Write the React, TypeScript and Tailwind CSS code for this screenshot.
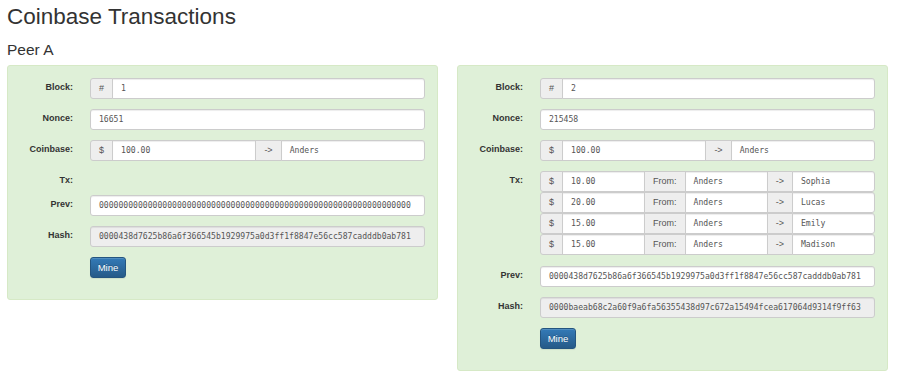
import React from "react";

const mono = { fontFamily: '"DejaVu Sans Mono", "Liberation Mono", monospace' } as React.CSSProperties;

function Addon({ children, first, last }: { children: React.ReactNode; first?: boolean; last?: boolean }) {
  return (
    <span
      className={
        "flex h-[21px] shrink-0 items-center justify-center border border-[#ccc] bg-[#eee] px-[8px] text-[9px] leading-[19px] text-[#555] " +
        (first ? "rounded-l-[3px] " : "-ml-px ") +
        (last ? "rounded-r-[3px]" : "")
      }
    >
      {children}
    </span>
  );
}

function Field({
  value,
  first,
  last,
  readOnly,
  grow = true,
}: {
  value: string;
  first?: boolean;
  last?: boolean;
  readOnly?: boolean;
  grow?: boolean;
}) {
  return (
    <div
      className={
        "flex h-[21px] min-w-0 items-center overflow-hidden whitespace-nowrap border border-[#ccc] px-[8px] text-[8.1px] leading-[19px] text-[#555] shadow-[inset_0_1px_1px_rgba(0,0,0,0.075)] " +
        (grow ? "flex-1 basis-0 " : "") +
        (readOnly ? "bg-[#eee] " : "bg-white ") +
        (first ? "rounded-l-[3px] " : "-ml-px ") +
        (last ? "rounded-r-[3px]" : "")
      }
      style={mono}
    >
      {value}
    </div>
  );
}

function Row({ label, children, className = "mb-[10px]" }: { label: string; children?: React.ReactNode; className?: string }) {
  return (
    <div className={"flex " + className}>
      <div className="w-[53px] shrink-0 pt-[3px] text-right text-[9px] font-bold leading-[13px] text-[#333]">{label}</div>
      <div className="ml-[17px] flex min-w-0 flex-1 flex-col">{children}</div>
    </div>
  );
}

type Tx = { amt: string; from: string; to: string };

function Block({ n, nonce, prev, hash, txs }: { n: string; nonce: string; prev: string; hash: string; txs: Tx[] }) {
  return (
    <div className="w-[431px] shrink-0 rounded-[3px] border border-[#d6e9c6] bg-[#dff0d8] px-[12px] pb-[11px] pt-[12px]">
      <Row label="Block:">
        <div className="flex">
          <Addon first>#</Addon>
          <Field value={n} last />
        </div>
      </Row>
      <Row label="Nonce:">
        <div className="flex">
          <Field value={nonce} first last />
        </div>
      </Row>
      <Row label="Coinbase:">
        <div className="flex">
          <Addon first>$</Addon>
          <Field value="100.00" />
          <Addon>-&gt;</Addon>
          <Field value="Anders" last />
        </div>
      </Row>
      {txs.length === 0 ? (
        <Row label="Tx:" className="mb-[10px] h-[14px]" />
      ) : (
        <Row label="Tx:" className="mb-[11px]">
          {txs.map((t, i) => (
            <div key={i} className="flex">
              <Addon first>$</Addon>
              <Field value={t.amt} />
              <Addon>From:</Addon>
              <Field value={t.from} />
              <Addon>-&gt;</Addon>
              <Field value={t.to} last />
            </div>
          ))}
        </Row>
      )}
      <Row label="Prev:">
        <div className="flex">
          <Field value={prev} first last />
        </div>
      </Row>
      <Row label="Hash:">
        <div className="flex">
          <Field value={hash} first last readOnly />
        </div>
      </Row>
      <Row label="" className="mb-[10px]">
        <div className="flex">
          <button className="h-[21px] w-[36px] rounded-[3px] border border-[#245580] bg-[linear-gradient(to_bottom,#337ab7_0%,#265a88_100%)] text-center text-[9.5px] leading-[19px] text-white shadow-[inset_0_1px_0_rgba(255,255,255,0.15),0_1px_1px_rgba(0,0,0,0.075)] [text-shadow:0_-1px_0_rgba(0,0,0,0.2)]">
            Mine
          </button>
        </div>
      </Row>
    </div>
  );
}

export default function App() {
  return (
    <div className="h-[376px] w-[900px] overflow-hidden bg-white px-[7px] text-[#333]" style={{ fontFamily: '"Liberation Sans", Arial, sans-serif' }}>
      <h1 className="mt-[4px] text-[22.5px] leading-[26px] font-normal">Coinbase Transactions</h1>
      <h3 className="mt-[11px] text-[15.5px] leading-[18px] font-normal">Peer A</h3>
      <div className="mt-[6px] flex items-start gap-[19px]">
        <Block
          n="1"
          nonce="16651"
          prev="0000000000000000000000000000000000000000000000000000000000000000"
          hash="0000438d7625b86a6f366545b1929975a0d3ff1f8847e56cc587cadddb0ab781"
          txs={[]}
        />
        <Block
          n="2"
          nonce="215458"
          prev="0000438d7625b86a6f366545b1929975a0d3ff1f8847e56cc587cadddb0ab781"
          hash="0000baeab68c2a60f9a6fa56355438d97c672a15494fcea617064d9314f9ff63"
          txs={[
            { amt: "10.00", from: "Anders", to: "Sophia" },
            { amt: "20.00", from: "Anders", to: "Lucas" },
            { amt: "15.00", from: "Anders", to: "Emily" },
            { amt: "15.00", from: "Anders", to: "Madison" },
          ]}
        />
      </div>
    </div>
  );
}
